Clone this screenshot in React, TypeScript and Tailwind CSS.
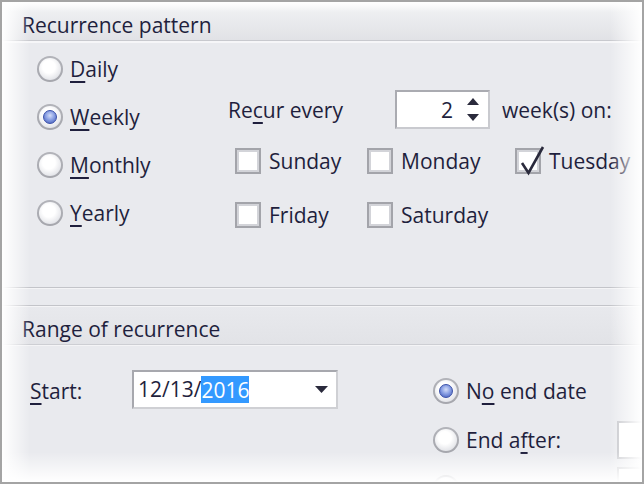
import React from "react";

const U = ({ children }: { children: React.ReactNode }) => (
  <span className="underline decoration-[2px] underline-offset-[4px]">{children}</span>
);

function Radio({ checked }: { checked?: boolean }) {
  return (
    <div className="w-[26px] h-[26px] shrink-0 rounded-full bg-[radial-gradient(circle_at_50%_40%,#c9cacf,#9899a0)] p-[2px]">
      <div className="w-full h-full rounded-full bg-[radial-gradient(circle_at_45%_40%,#ffffff_35%,#e6e7eb_70%,#cdced3)] flex items-center justify-center">
        {checked && (
          <div className="w-[14px] h-[14px] rounded-full border border-[#3a50a8] bg-[radial-gradient(circle_at_50%_38%,#d4ddf8,#8aa0e4_45%,#3c55b6)]" />
        )}
      </div>
    </div>
  );
}

function Box({ checked }: { checked?: boolean }) {
  return (
    <div className="relative w-[26px] h-[26px] shrink-0 border-2 border-[#a3a4aa]">
      <div className="w-full h-full border-2 border-[#d3d4d9] bg-white" />
      {checked && (
        <svg className="absolute left-0 top-[-6px]" width="30" height="32" viewBox="0 0 30 32">
          <path d="M5 19 L11.5 29 L26 3" fill="none" stroke="#2a2a3c" strokeWidth="2.6" strokeLinejoin="miter" />
        </svg>
      )}
    </div>
  );
}

function RadioRow({ checked, children, h }: { checked?: boolean; children: React.ReactNode; h: string }) {
  return (
    <div className={`flex items-center gap-[7px] ${h}`}>
      <Radio checked={checked} />
      <span className="pt-[2px]">{children}</span>
    </div>
  );
}

function CheckItem({ checked, children }: { checked?: boolean; children: React.ReactNode }) {
  return (
    <div className="flex items-center gap-[8px] h-[26px]">
      <Box checked={checked} />
      <span className="pt-[2px]">{children}</span>
    </div>
  );
}

export default function App() {
  return (
    <div className="relative w-[644px] h-[484px] overflow-hidden border-2 border-[#a4a4a4] bg-[#e9eaee] font-['Open_Sans',sans-serif] text-[21px] text-[#1f1f3d] flex flex-col">
      {/* Header 1 */}
      <div className="h-[38px] shrink-0 flex items-center pl-[20px] pt-[9px] bg-linear-to-b from-[#f2f3f5] to-[#e1e2e6]">
        Recurrence pattern
      </div>
      <div className="h-px shrink-0 bg-[#c8c9ce]" />
      <div className="h-[2px] shrink-0 bg-[#f6f6f8]" />

      {/* Body 1 */}
      <div className="h-[244px] shrink-0 flex">
        <div className="w-[226px] shrink-0 pl-[35px] pt-[2px] flex flex-col">
          <RadioRow h="h-[48px]"><U>D</U>aily</RadioRow>
          <RadioRow h="h-[48px]" checked><U>W</U>eekly</RadioRow>
          <RadioRow h="h-[48px]"><U>M</U>onthly</RadioRow>
          <RadioRow h="h-[48px]"><U>Y</U>early</RadioRow>
        </div>
        <div className="flex flex-col pt-[47px]">
          <div className="flex items-center h-[39px]">
            <span className="w-[167px] shrink-0 pt-[2px]">Re<U>c</U>ur every</span>
            <div className="w-[95px] h-[39px] shrink-0 bg-white border-2 border-[#aaabb1] border-r-[#c9cacf] border-b-[#c9cacf] flex items-center justify-end pr-[9px]">
              <span className="pt-[2px]">2</span>
              <div className="ml-[14px] flex flex-col gap-[7px]">
                <svg width="12" height="8" viewBox="0 0 12 8">
                  <path d="M6 0 L12 7 L0 7 Z" fill="#2a2a3c" />
                </svg>
                <svg width="12" height="8" viewBox="0 0 12 8">
                  <path d="M0 1 L12 1 L6 8 Z" fill="#2a2a3c" />
                </svg>
              </div>
            </div>
            <span className="ml-[12px] whitespace-nowrap pt-[2px]">week(s) on:</span>
          </div>
          <div className="ml-[7px] mt-[19px] grid grid-cols-[132px_148px_auto] gap-y-[28px]">
            <CheckItem>Sunday</CheckItem>
            <CheckItem>Monday</CheckItem>
            <CheckItem checked>Tuesday</CheckItem>
            <CheckItem>Friday</CheckItem>
            <CheckItem>Saturday</CheckItem>
          </div>
        </div>
      </div>

      <div className="h-px shrink-0 bg-[#c3c4c9]" />
      <div className="h-px shrink-0 bg-[#f4f4f6]" />
      <div className="h-[16px] shrink-0" />
      <div className="h-px shrink-0 bg-[#c3c4c9]" />
      <div className="h-px shrink-0 bg-[#f4f4f6]" />

      {/* Header 2 */}
      <div className="h-[37px] shrink-0 flex items-center pl-[20px] pt-[8px] bg-linear-to-b from-[#e8e9ed] to-[#e2e3e7]">
        Range of recurrence
      </div>
      <div className="h-px shrink-0 bg-[#cdced3]" />
      <div className="h-px shrink-0 bg-[#f4f4f6]" />

      {/* Body 2 */}
      <div className="flex pt-[20px]">
        <div className="w-[130px] shrink-0 pl-[28px] h-[49px] flex items-center">
          <span className="pt-[2px]"><U>S</U>tart:</span>
        </div>
        <div className="w-[206px] h-[39px] mt-[4px] shrink-0 bg-white border-2 border-[#a7a8ae] border-r-[#cfd0d4] border-b-[#cfd0d4] flex items-center pl-[4px] pr-[8px]">
          <span className="pt-[1px]">12/13/</span>
          <span className="bg-[#3399ff] text-white leading-[26px] pt-[1px]">2016</span>
          <svg className="ml-auto" width="13" height="7" viewBox="0 0 13 7">
            <path d="M0 0 L13 0 L6.5 7 Z" fill="#2a2a3c" />
          </svg>
        </div>
        <div className="ml-[95px] flex flex-col">
          <RadioRow h="h-[49px]" checked>N<U>o</U> end date</RadioRow>
          <div className="flex items-center h-[49px]">
            <Radio />
            <span className="ml-[7px] w-[151px] shrink-0 pt-[2px]">End a<U>f</U>ter:</span>
            <div className="w-[80px] h-[38px] shrink-0 bg-white border-2 border-[#c3c4c9]" />
          </div>
          <div className="flex items-start h-[49px] pt-[11px]">
            <Radio />
            <div className="ml-[158px] w-[80px] h-[38px] -mt-[8px] shrink-0 bg-white border-2 border-[#c3c4c9]" />
          </div>
        </div>
      </div>

      {/* edge fades */}
      <div className="pointer-events-none absolute left-0 top-0 bottom-0 w-[28px] bg-linear-to-r from-white to-transparent" />
      <div className="pointer-events-none absolute right-0 top-0 bottom-0 w-[32px] bg-linear-to-l from-white to-transparent" />
      <div className="pointer-events-none absolute left-0 right-0 top-0 h-[10px] bg-linear-to-b from-white to-transparent" />
      <div className="pointer-events-none absolute left-0 right-0 bottom-0 h-[30px] bg-linear-to-t from-white to-transparent" />
    </div>
  );
}
